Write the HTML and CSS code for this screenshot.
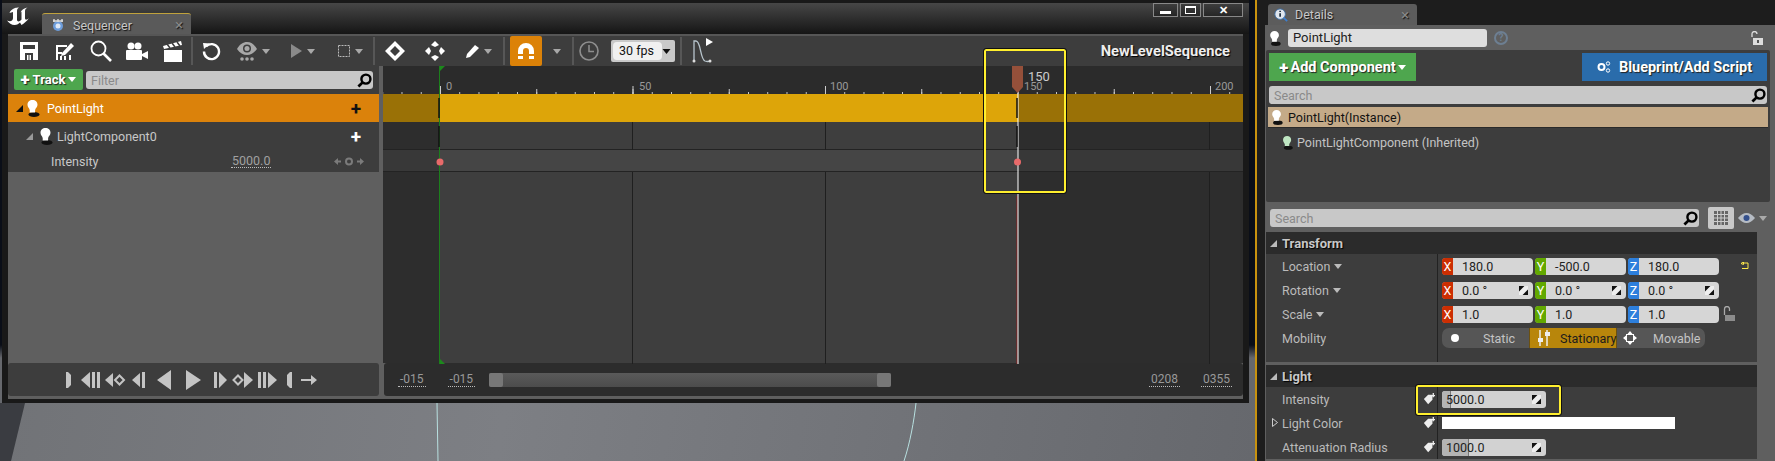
FILE: index.html
```html
<!DOCTYPE html>
<html lang="en">
<head>
  <meta charset="UTF-8">
  <title>Sequencer</title>
  <link rel="stylesheet" href="styles.css">
</head>
<body>
  <svg class="defs" width="0" height="0">
    <defs>
      <symbol id="bulb" viewBox="0 0 16 18">
        <ellipse cx="9" cy="15.5" rx="5.5" ry="2.5" fill="#111"/>
        <path d="M7.5 1C4.6 1 2.5 3 2.5 5.8c0 2.2 1.6 3.2 2.2 5.2v2.4h5.4V11c.6-2 2.4-3 2.4-5.2C12.500 3 10.400 1 7.500 1z" fill="currentColor"/>
      </symbol>
      <symbol id="spin" viewBox="0 0 10 10">
        <path d="M6 0h4v4L4 10H0V6z" fill="#eee"/>
        <path d="M0 0h6L0 6zM10 10H4l6-6z" fill="#111"/>
      </symbol>
      <symbol id="glass" viewBox="0 0 16 16">
        <circle cx="9.500" cy="6.500" r="4.800" fill="none" stroke="#000" stroke-width="2.600"/>
        <path d="M6 10l-4.500 4.500" stroke="#000" stroke-width="3"/>
      </symbol>
      <symbol id="key" viewBox="0 0 14 14">
        <path d="M1 7l5-5h5v6l-5 5z" fill="#eee"/>
        <path d="M10 3h4M12 0v5" stroke="#eee" stroke-width="1.500"/>
      </symbol>
      <symbol id="caret" viewBox="0 0 8 5">
        <path d="M0 0h8L4 5z" fill="currentColor"/>
      </symbol>
    </defs>
  </svg>

  <div class="stage">
    <div class="win">
      <div class="titlebar">
        <svg class="ue-logo" viewBox="0 0 22 18"><path d="M8 1C5 2 3 4 2.500 6L6 5v6c0 3-2.500 4-6 2.500C2 16 4.500 18 7.500 18c2.500 0 4.500-1.500 5.500-2.500l1.500 2.500c2.500-1.500 5.500-4 7.500-7-2 2-4 2.500-4 0V4c0-1.500 1-2.500 2.500-3.500-3.500.5-6 2.500-7 5l1-.7v7.700c-1 1.500-3 2.500-4 1.500-.5-.5-.5-1-.5-2V4c0-1.500.5-2.500 2-3.500-1.500 0-3 .3-4 .5z" fill="#fff"/></svg>
        <div class="tab">
          <svg class="tab-ico" viewBox="0 0 14 14"><circle cx="7" cy="8" r="5" fill="#6d9ddb"/><path d="M2 3h10M3 1v3M7 1v3M11 1v3" stroke="#ddd" stroke-width="1.400"/><circle cx="7" cy="8" r="2.500" fill="#dfe9f7"/></svg>
          <span>Sequencer</span>
          <i class="tab-x">×</i>
        </div>
        <div class="win-ctl">
          <span class="ctl ctl-min"><b></b></span>
          <span class="ctl ctl-max"><b></b></span>
          <span class="ctl ctl-close">✕</span>
        </div>
      </div>

      <div class="toolbar">
        <span class="tb-btn"><svg width="20" height="20" viewBox="0 0 20 20"><path d="M1 1h18v18h-5v-7H6v7H1z M4 4v4h12V4z" fill="#fff" fill-rule="evenodd"/><path d="M8 14h1.500v5H8zM10.500 14H12v5h-1.500z" fill="#fff"/></svg></span>
        <span class="tb-btn"><svg width="20" height="20" viewBox="0 0 20 20"><path d="M1 4h11v2H3v5h4v2H3v6H1zM9 15h2v4H9zM5 15h2v4H5zM14 14h2v5h-2z" fill="#fff"/><path d="M7 12l9-10 3 3-9 9-4 1z" fill="#fff"/></svg></span>
        <span class="tb-btn"><svg width="22" height="22" viewBox="0 0 22 22"><circle cx="8.500" cy="8.500" r="7" fill="none" stroke="#fff" stroke-width="1.800"/><path d="M13.500 13.500L21 21" stroke="#fff" stroke-width="2.600"/></svg></span>
        <span class="tb-btn"><svg width="22" height="18" viewBox="0 0 22 18"><circle cx="5" cy="4" r="3.500" fill="#fff"/><circle cx="12" cy="4" r="3.500" fill="#fff"/><rect y="8" width="16" height="10" rx="1" fill="#fff"/><path d="M16 12l6-3v8l-6-3z" fill="#fff"/></svg></span>
        <span class="tb-btn"><svg width="20" height="21" viewBox="0 0 20 21"><path d="M1 9h18v12H1z" fill="#fff"/><path d="M0 5l18-5 1 4L1 8z" fill="#fff"/><path d="M4 3l3 4M9 2l3 4M14 1l3 4" stroke="#3d3d3d" stroke-width="1.500"/></svg></span>
        <i class="tb-sep"></i>
        <span class="tb-btn"><svg width="19" height="19" viewBox="0 0 19 19"><path d="M4 4.500A7.500 7.500 0 1 1 2 9.500" fill="none" stroke="#fff" stroke-width="2.400"/><path d="M1 1l7 .5L2 7z" fill="#fff"/></svg></span>
        <span class="tb-drop dim"><svg width="20" height="19" viewBox="0 0 20 19"><path d="M0 7c3-5 6-7 10-7s7 2 10 7c-3 4-6 6-10 6S3 11 0 7z" fill="#a8a8a8"/><circle cx="10" cy="6.500" r="4" fill="#3d3d3d"/><circle cx="10" cy="6.500" r="2.500" fill="#a8a8a8"/><circle cx="5" cy="17" r="1.800" fill="#a8a8a8"/><circle cx="10" cy="17" r="1.800" fill="#a8a8a8"/><circle cx="15" cy="17" r="1.800" fill="#a8a8a8"/></svg><svg class="cr" width="8" height="5"><use href="#caret"/></svg></span>
        <span class="tb-drop dim drop-play"><svg width="11" height="14" viewBox="0 0 11 14"><path d="M0 0l11 7-11 7z" fill="#8a8a8a"/></svg><svg class="cr" width="8" height="5"><use href="#caret"/></svg></span>
        <span class="tb-drop dim drop-sel"><svg width="12" height="12" viewBox="0 0 12 12"><rect x=".5" y=".5" width="11" height="11" fill="none" stroke="#bbb" stroke-dasharray="2 1"/></svg><svg class="cr" width="8" height="5"><use href="#caret"/></svg></span>
        <i class="tb-sep"></i>
        <span class="tb-key"><svg width="20" height="20" viewBox="0 0 20 20"><path d="M10 0l10 10-10 10L0 10zM10 5L5 10l5 5 5-5z" fill="#fff" fill-rule="evenodd"/></svg></span>
        <span class="tb-key"><svg width="20" height="20" viewBox="0 0 20 20"><path d="M10 0l4 4-4 2-4-2zM10 20l-4-4 4-2 4 2zM0 10l4-4 2 4-2 4zM20 10l-4 4-2-4 2-4z" fill="#fff"/></svg></span>
        <span class="tb-drop"><svg width="13" height="13" viewBox="0 0 13 13"><path d="M0 13l1-4 8-9 4 3-9 9z" fill="#fff"/></svg><svg class="cr" width="8" height="5"><use href="#caret"/></svg></span>
        <i class="tb-sep"></i>
        <span class="tb-snap"><svg width="18" height="18" viewBox="0 0 18 18"><path d="M1 12V9a8 8 0 0 1 16 0v3h-5V9a3 3 0 0 0-6 0v3z" fill="#fff"/><path d="M1 14h5v3H1zM12 14h5v3h-5z" fill="#fff"/></svg></span>
        <span class="tb-snapdrop"><svg class="cr" width="8" height="5"><use href="#caret"/></svg></span>
        <i class="tb-sep tb-sep-nm"></i>
        <span class="tb-clock"><svg width="20" height="20" viewBox="0 0 20 20"><circle cx="10" cy="10" r="9" fill="none" stroke="#8e8e8e" stroke-width="1.600"/><path d="M10 4v6.500h5" fill="none" stroke="#8e8e8e" stroke-width="1.500"/></svg></span>
        <span class="fps"><span class="fps-val">30 fps</span><svg width="9" height="5"><use href="#caret"/></svg></span>
        <i class="tb-sep tb-sep-fps"></i>
        <svg class="curve-ico" width="23" height="28" viewBox="0 0 23 28"><path d="M3 24V4h2c5 0 4 18 9 20 2 .7 4 .5 5 0" fill="none" stroke="#b7c4cc" stroke-width="1.300"/><circle cx="3" cy="24" r="1.500" fill="#ddd"/><circle cx="19" cy="24" r="1.500" fill="#ddd"/><path d="M15 1l7 4-7 4z" fill="#fff"/></svg>
        <span class="seq-name">NewLevelSequence</span>
      </div>

      <div class="seq-main">
        <div class="tree">
          <div class="filter-row">
            <span class="track-btn"><b class="plus">+</b> Track <svg width="8" height="5"><use href="#caret"/></svg></span>
            <span class="filter"><span>Filter</span><svg width="15" height="15"><use href="#glass"/></svg></span>
          </div>
          <div class="tree-row tree-sel">
            <svg class="tri" width="7" height="7" viewBox="0 0 7 7"><path d="M7 0v7H0z" fill="#111"/></svg>
            <svg class="bulb" width="16" height="18"><use href="#bulb"/></svg>
            <span class="tree-name">PointLight</span>
            <span class="tree-add add-dark">+</span>
          </div>
          <div class="tree-row tree-sub">
            <svg class="tri" width="7" height="7" viewBox="0 0 7 7"><path d="M7 0v7H0z" fill="#999"/></svg>
            <svg class="bulb" width="16" height="18"><use href="#bulb"/></svg>
            <span class="tree-name">LightComponent0</span>
            <span class="tree-add">+</span>
          </div>
          <div class="tree-row tree-prop">
            <span class="prop-name">Intensity</span>
            <span class="prop-val">5000.0</span>
            <span class="prop-keys">
              <svg width="30" height="9" viewBox="0 0 30 9"><path d="M0 4.500L4 1v2.500h3v2H4V8zM30 4.500L26 1v2.500h-3v2h3V8z" fill="#7b7b7b"/><circle cx="15" cy="4.500" r="3" fill="none" stroke="#7b7b7b" stroke-width="2"/></svg>
            </span>
          </div>
        </div>

        <div class="timeline">
          <div class="ruler">
            <span class="r-lbl" style="left:63px">0</span>
            <span class="r-lbl" style="left:256px">50</span>
            <span class="r-lbl" style="left:447px">100</span>
            <span class="r-lbl" style="left:641px">150</span>
            <span class="r-lbl" style="left:832px">200</span>
            <span class="head-lbl">150</span>
          </div>
          <div class="tl-row tl-sel"></div>
          <div class="tl-row tl-sub"></div>
          <div class="tl-row tl-prop"></div>
          <div class="tl-rest"></div>
          <svg class="tl-over" width="860" height="298" viewBox="0 0 860 298">
            <g stroke="#1f1f1f">
              <path d="M249.500 56v28M249.500 106v192M442.500 56v28M442.500 106v192M826.500 56v28M826.500 106v192"/>
            </g>
            <path d="M56.500 0v298" stroke="#1c7f1c"/>
            <path d="M57 0h5l-5 5z" fill="#1c8a1c"/>
            <path d="M57 293l5 5h-5z" fill="#1c8a1c"/>
            <path d="M56 32v20M56 60v21" stroke="#111" stroke-width="1.500"/>
            <path d="M634 130v168" stroke="#8a1c1c"/>
            <path d="M635 28v270" stroke="#fff"/>
            <path d="M634 32v20M634 60v21" stroke="#111" stroke-width="1.500"/>
            <path d="M629 0h11v21l-5.500 6-5.500-6z" fill="#95503a"/>
            <circle cx="57" cy="96" r="3.500" fill="#e86a6a"/>
            <circle cx="634.500" cy="96" r="3.500" fill="#e86a6a"/>
          </svg>
        </div>
      </div>

      <div class="seq-foot">
        <div class="transport">
          <svg width="280" height="24" viewBox="0 0 280 24" fill="#c4c4c4">
            <path d="M16 4h2l3 3v10l-3 3h-2z"/>
            <path d="M31 12l9-8v16zM42 4h3v16h-3zM47 4h3v16h-3z"/>
            <path d="M55 12l8-7v14z"/><path d="M69.500 7.500l4.500 4.500-4.500 4.500L65 12z" fill="none" stroke="#c4c4c4" stroke-width="2"/>
            <path d="M82 12l8-7v14zM92 4h3v16h-3z"/>
            <path d="M107 12l14-10v20zM136 2l15 10-15 10z"/>
            <path d="M164 4h3v16h-3zM169 4l8 8-8 8z"/>
            <path d="M188 7.500l4.500 4.500-4.500 4.500-4.500-4.500z" fill="none" stroke="#c4c4c4" stroke-width="2"/><path d="M194 4l9 8-9 8z"/>
            <path d="M208 4h3v16h-3zM213 4h3v16h-3zM218 4l9 8-9 8z"/>
            <path d="M242 4h-2l-3 3v10l3 3h2z"/>
            <path d="M251 11h10V7l6 5-6 5v-4h-10z"/>
          </svg>
        </div>
        <div class="tl-foot">
          <span class="time t-first">-015</span>
          <span class="time t-second">-015</span>
          <div class="hscroll"><i></i><i></i></div>
          <span class="time t-third">0208</span>
          <span class="time t-fourth">0355</span>
        </div>
      </div>
    </div>

    <div class="viewport">
      <svg class="vp-lines" width="1255" height="58" viewBox="0 0 1255 58">
        <path d="M0 0h25L11 58H0z" fill="#3a3c41"/>
        <path d="M437 0l1 58M916 0c-2 18-6 40-12 58" fill="none" stroke="#b8e0e0"/>
      </svg>
    </div>

    <div class="callout callout-seq"></div>
  </div>

  <aside class="details">
    <div class="det-tabs">
      <div class="det-tab">
        <svg class="tab-ico" width="16" height="16" viewBox="0 0 16 16"><circle cx="7" cy="7" r="6" fill="#dfe6ee" stroke="#3b6ea8"/><path d="M7 3v1.500M7 6v4" stroke="#234" stroke-width="2"/><path d="M11 11l4 4" stroke="#3b7ed0" stroke-width="2"/></svg>
        <span>Details</span>
        <i class="tab-x">×</i>
      </div>
    </div>
    <div class="name-row">
      <svg class="bulb" width="14" height="16"><use href="#bulb"/></svg>
      <span class="name-input">PointLight</span>
      <span class="help">?</span>
      <svg class="lock" width="14" height="14" viewBox="0 0 14 14"><path d="M2 6V3a2.500 2.500 0 0 1 5 0" fill="none" stroke="#ddd" stroke-width="1.300"/><rect x="3" y="7" width="10" height="7" fill="#ddd"/><rect x="7" y="9" width="2" height="3" fill="#555"/></svg>
    </div>
    <div class="comp-box">
      <div class="comp-actions">
        <span class="add-comp"><b class="plus">+</b>Add Component <svg width="8" height="5"><use href="#caret"/></svg></span>
        <span class="bp-btn">
          <svg width="14" height="12" viewBox="0 0 14 12"><circle cx="4.500" cy="6" r="3" fill="none" stroke="#fff" stroke-width="2"/><circle cx="11" cy="2.500" r="1.700" fill="none" stroke="#fff"/><circle cx="11" cy="9.500" r="1.700" fill="none" stroke="#fff"/></svg>
          Blueprint/Add Script
        </span>
      </div>
      <div class="search search-comp"><span>Search</span><svg width="15" height="15"><use href="#glass"/></svg></div>
      <div class="inst-row">
        <svg class="bulb" width="14" height="16"><use href="#bulb"/></svg>
        <span>PointLight(Instance)</span>
      </div>
      <div class="inh-row">
        <svg class="bulb bulb-green" width="13" height="15"><use href="#bulb"/></svg>
        <span>PointLightComponent (Inherited)</span>
      </div>
    </div>
    <div class="search-row">
      <div class="search search-det"><span>Search</span><svg width="15" height="15"><use href="#glass"/></svg></div>
      <span class="grid-btn"><svg width="14" height="14" viewBox="0 0 14 14"><path d="M0 0h14v14H0z" fill="#666"/><path d="M0 3.500h14M0 7h14M0 10.500h14M3.500 0v14M7 0v14M10.500 0v14" stroke="#ccc"/></svg></span>
      <svg class="eye-ico" width="17" height="10" viewBox="0 0 17 10"><path d="M0 5c3-3.500 5.500-5 8.500-5s5.500 1.500 8.500 5c-3 3.500-5.500 5-8.500 5S3 8.500 0 5z" fill="#b6bcc4"/><circle cx="8.500" cy="5" r="3" fill="#34508c"/></svg>
      <svg class="eye-cr" width="8" height="5"><use href="#caret"/></svg>
    </div>

    <div class="props">
      <section class="sect">
        <h3 class="sect-head"><svg width="7" height="7" viewBox="0 0 7 7"><path d="M7 0v7H0z" fill="#bbb"/></svg>Transform</h3>
        <div class="p-row">
          <div class="p-label">Location <svg width="8" height="5"><use href="#caret"/></svg></div>
          <div class="p-val">
            <div class="vec">
              <span class="fld"><b class="ax ax-x">X</b><span>180.0</span></span>
              <span class="fld"><b class="ax ax-y">Y</b><span>-500.0</span></span>
              <span class="fld"><b class="ax ax-z">Z</b><span>180.0</span></span>
            </div>
            <svg class="reset" width="8" height="8" viewBox="0 0 8 8"><path d="M3 1H7v5.500H1M2.500 0v2.500L0 1.500z" fill="none" stroke="#ffe94a"/></svg>
          </div>
        </div>
        <div class="p-row">
          <div class="p-label">Rotation <svg width="8" height="5"><use href="#caret"/></svg></div>
          <div class="p-val">
            <div class="vec">
              <span class="fld"><b class="ax ax-x">X</b><span>0.0 °</span><svg class="sp" width="9" height="9"><use href="#spin"/></svg></span>
              <span class="fld"><b class="ax ax-y">Y</b><span>0.0 °</span><svg class="sp" width="9" height="9"><use href="#spin"/></svg></span>
              <span class="fld"><b class="ax ax-z">Z</b><span>0.0 °</span><svg class="sp" width="9" height="9"><use href="#spin"/></svg></span>
            </div>
          </div>
        </div>
        <div class="p-row">
          <div class="p-label">Scale <svg width="8" height="5"><use href="#caret"/></svg></div>
          <div class="p-val">
            <div class="vec">
              <span class="fld"><b class="ax ax-x">X</b><span>1.0</span></span>
              <span class="fld"><b class="ax ax-y">Y</b><span>1.0</span></span>
              <span class="fld"><b class="ax ax-z">Z</b><span>1.0</span></span>
            </div>
            <svg class="scale-lock" width="13" height="16" viewBox="0 0 13 16"><path d="M1.500 9V3a2.500 2.500 0 0 1 5 0v2" fill="none" stroke="#aaa" stroke-width="1.300"/><rect x="2" y="9" width="10" height="6" fill="#8c8c8c"/></svg>
          </div>
        </div>
        <div class="p-row p-row-mob">
          <div class="p-label">Mobility</div>
          <div class="p-val">
            <div class="mob">
              <span class="mob-opt mob-static"><i class="dot"></i><span>Static</span></span>
              <span class="mob-opt mob-stat">
                <svg width="13" height="16" viewBox="0 0 13 16"><path d="M2 0v16M9 0v16" stroke="#eee" stroke-width="1.500"/><rect x="0" y="8" width="5" height="4" fill="#eee"/><rect x="7" y="2" width="5" height="4" fill="#eee"/></svg>
                <span>Stationary</span>
              </span>
              <span class="mob-opt mob-move">
                <svg width="14" height="14" viewBox="0 0 14 14"><path d="M7 0l2.500 3h-5zM7 14l-2.500-3h5zM0 7l3-2.500v5zM14 7l-3 2.500v-5z" fill="#fff"/><rect x="3.500" y="3.500" width="7" height="7" fill="none" stroke="#fff"/></svg>
                <span>Movable</span>
              </span>
            </div>
          </div>
        </div>
      </section>
      <section class="sect sect-light">
        <h3 class="sect-head"><svg width="7" height="7" viewBox="0 0 7 7"><path d="M7 0v7H0z" fill="#bbb"/></svg>Light</h3>
        <div class="p-row">
          <div class="p-label">Intensity <svg class="p-key" width="12" height="12"><use href="#key"/></svg></div>
          <div class="p-val">
            <span class="slider-fld"><i class="fill" style="width:9px"></i><span>5000.0</span><svg class="sp" width="9" height="9"><use href="#spin"/></svg></span>
          </div>
        </div>
        <div class="p-row">
          <div class="p-label"><svg class="p-exp" width="6" height="9" viewBox="0 0 6 9"><path d="M.5.500l5 4-5 4z" fill="none" stroke="#ccc"/></svg>Light Color <svg class="p-key" width="12" height="12"><use href="#key"/></svg></div>
          <div class="p-val"><span class="color-swatch"></span></div>
        </div>
        <div class="p-row">
          <div class="p-label">Attenuation Radius <svg class="p-key" width="12" height="12"><use href="#key"/></svg></div>
          <div class="p-val">
            <span class="slider-fld"><i class="fill" style="width:27px"></i><span>1000.0</span><svg class="sp" width="9" height="9"><use href="#spin"/></svg></span>
          </div>
        </div>
      </section>
      <div class="callout callout-det"></div>
    </div>
  </aside>
</body>
</html>
```

FILE: styles.css
```css
:root {
  --panel: #3d3d3d;
  --panel-dark: #2c2c2c;
  --gutter: #5f5f5f;
  --text: #c8c8c8;
  --in-range: #3e3e3e;
  --out-range: #2d2d2d;
}

* {
  box-sizing: border-box;
}

html, body {
  margin: 0;
  height: 461px;
  overflow: hidden;
}

body {
  display: flex;
  font-family: Roboto, "Liberation Sans", sans-serif;
  font-size: 12.5px;
  color: var(--text);
  background: #1d1d1d;
}

.defs {
  position: absolute;
}

svg {
  display: block;
  flex: none;
}

/* left side: sequencer window over the viewport */

.stage {
  position: relative;
  width: 1257px;
  flex: none;
  display: flex;
  flex-direction: column;
  border-right: 2px solid #c8920f;
  background: linear-gradient(to bottom, #0a0e18 345px, #66686d 358px);
}

.win {
  width: 1247px;
  height: 403px;
  margin-left: 2px;
  padding: 3px 6px 4px;
  background: #191919;
  display: flex;
  flex-direction: column;
}

.titlebar {
  height: 31px;
  margin: 0 -6px;
  padding: 0 6px 0 5px;
  display: flex;
  background: linear-gradient(to bottom, #474747, #151515);
  position: relative;
}

.ue-logo {
  width: 22px;
  height: 18px;
  margin: 4px 13px 0 0;
}

.tab {
  width: 149px;
  margin-top: 10px;
  height: 23px;
  padding: 0 8px 0 9px;
  display: flex;
  align-items: center;
  gap: 8px;
  background: #5a5a5a;
  border-top: 1px solid #c0a23c;
  border-radius: 3px 3px 0 0;
  text-shadow: 1px 1px 1px #111;
}

.tab-ico {
  width: 14px;
  height: 14px;
}

.tab-x {
  margin-left: auto;
  font-style: normal;
  font-size: 15px;
  color: #888;
}

.win-ctl {
  margin-left: auto;
  display: flex;
  height: 14px;
  gap: 2px;
  margin-right: 0;
}

.ctl {
  height: 14px;
  display: flex;
  align-items: center;
  justify-content: center;
  border: 1px solid #888;
  background: linear-gradient(to bottom, #3d3d3d, #262626);
  color: #fff;
  font-size: 11px;
  font-weight: 700;
}

.ctl-min {
  width: 25px;
}

.ctl-min b {
  width: 11px;
  height: 3px;
  margin-top: 4px;
  background: #fff;
}

.ctl-max {
  width: 21px;
}

.ctl-max b {
  width: 11px;
  height: 8px;
  border: 1px solid #fff;
  border-top-width: 2px;
}

.ctl-close {
  width: 40px;
}

/* toolbar */

.toolbar {
  height: 32px;
  padding: 0 0 0 3px;
  display: flex;
  align-items: center;
  background: var(--panel);
  border-top: 2px solid #565656;
  position: relative;
}

.tb-btn {
  width: 36px;
  display: flex;
  justify-content: center;
}

.tb-sep {
  width: 2px;
  height: 28px;
  flex: none;
  background: #575757;
}

.tb-drop {
  width: 48px;
  display: flex;
  align-items: center;
  justify-content: center;
  gap: 5px;
  color: #a8a8a8;
}

.drop-play {
  padding-left: 3px;
}

.drop-sel {
  padding-left: 2px;
}

.tb-key {
  width: 40px;
  display: flex;
  justify-content: center;
}

.tb-snap {
  width: 32px;
  height: 30px;
  margin-left: 5px;
  display: flex;
  align-items: center;
  justify-content: center;
  background: #dc8208;
  border-radius: 2px;
}

.tb-snapdrop {
  width: 30px;
  display: flex;
  justify-content: center;
  color: #a8a8a8;
}

.tb-clock {
  width: 31px;
  padding-left: 5px;
}

.fps {
  width: 64px;
  height: 22px;
  margin-left: 6px;
  padding-right: 4px;
  display: flex;
  align-items: center;
  justify-content: space-between;
  background: #c9c9c9;
  border-radius: 2px;
  color: #111;
}

.fps-val {
  width: 50px;
  height: 18px;
  margin-left: 2px;
  padding-left: 6px;
  line-height: 18px;
  background: #f0f0f0;
  border-radius: 4px;
}

.tb-sep-fps {
  margin-left: 5px;
}

.curve-ico {
  margin-left: 9px;
}

.seq-name {
  margin-left: auto;
  margin-right: 13px;
  color: #eee;
  font-size: 14.7px;
  font-weight: 700;
  text-shadow: 1px 1px 1px #000;
}

/* tree on the left, tracks on the right */

.seq-main {
  height: 298px;
  display: flex;
}

.tree {
  width: 375px;
  flex: none;
  background: var(--gutter);
}

.filter-row {
  height: 28px;
  padding: 3px 6px 0 6px;
  display: flex;
  gap: 3px;
  background: var(--panel);
  margin-right: 4px;
}

.track-btn {
  width: 69px;
  height: 21px;
  display: flex;
  align-items: center;
  justify-content: center;
  gap: 3px;
  background: #4ea64e;
  border-radius: 2px;
  color: #fff;
  font-weight: 700;
  font-size: 13px;
  text-shadow: 1px 1px 1px #222;
}

.plus {
  font-size: 17px;
  line-height: 17px;
}

.filter {
  flex: 1;
  height: 18px;
  margin-top: 2px;
  padding: 0 1px 0 5px;
  display: flex;
  align-items: center;
  justify-content: space-between;
  background: #c8c8c8;
  border-radius: 3px;
  color: #8a8a8a;
}

.tree-row {
  display: flex;
  align-items: center;
  margin-right: 4px;
  position: relative;
}

.tri {
  margin: 0 2px 0 1px;
}

.tree-sel {
  height: 28px;
  padding-left: 7px;
  background: #db820b;
  color: #fff;
}

.tree-sel .tree-name {
  margin-left: 6px;
}

.tree-sub {
  height: 28px;
  padding-left: 17px;
  background: var(--panel);
}

.tree-sub .tri {
  margin-right: 5px;
}

.bulb {
  color: #fff;
}

.bulb-green {
  color: #bfe6c2;
}

.tree-name {
  margin-left: 3px;
}

.tree-add {
  position: absolute;
  right: 18px;
  font-size: 19px;
  font-weight: 700;
  color: #fff;
}

.add-dark {
  color: #111;
}

.tree-prop {
  height: 22px;
  padding-left: 43px;
  background: var(--panel);
}

.prop-val {
  position: absolute;
  left: 223px;
  color: #a0a0a0;
  border-bottom: 1px dotted #bbb;
  line-height: 13px;
  padding: 0 1px;
}

.prop-keys {
  position: absolute;
  left: 326px;
}

.timeline {
  flex: 1;
  position: relative;
  display: flex;
  flex-direction: column;
  background: var(--out-range);
}

.ruler {
  height: 28px;
  position: relative;
  background:
    linear-gradient(90deg, #ccc 1px, transparent 1px) 57px 100% / 192.5px 8px repeat-x,
    linear-gradient(90deg, #ccc 1px, transparent 1px) 57px 100% / 96.25px 5px repeat-x,
    linear-gradient(90deg, #ccc 1px, transparent 1px) 18.5px 100% / 19.25px 2px repeat-x,
    #2b2b2b;
}

.r-lbl {
  position: absolute;
  bottom: 1px;
  font-size: 11px;
  color: #999;
}

.head-lbl {
  position: absolute;
  left: 645px;
  top: 3px;
  font-size: 13px;
  color: #ccc;
}

.tl-row {
  --on: var(--in-range);
  --off: var(--out-range);
  background: linear-gradient(90deg, var(--off) 57px, var(--on) 57px, var(--on) 635px, var(--off) 635px);
}

.tl-sel {
  height: 28px;
  --on: #dda509;
  --off: #9a7106;
}

.tl-sub {
  height: 28px;
  border-bottom: 1px solid #232323;
}

.tl-prop {
  height: 22px;
  --on: #454545;
  --off: #383838;
  border-bottom: 1px solid #232323;
}

.tl-rest {
  flex: 1;
  background: linear-gradient(90deg, var(--out-range) 57px, var(--in-range) 57px, var(--in-range) 635px, var(--out-range) 635px);
}

.tl-over {
  position: absolute;
  left: 0;
  top: 0;
}

/* bottom strip */

.seq-foot {
  height: 36px;
  display: flex;
  gap: 5px;
  background: var(--gutter);
  border-bottom: 1px solid #5e5e5e;
  padding-bottom: 2px;
}

.transport {
  width: 371px;
  padding-left: 42px;
  display: flex;
  align-items: center;
  background: var(--panel);
  border-radius: 3px;
}

.tl-foot {
  flex: 1;
  padding: 0 11px 0 14px;
  display: flex;
  align-items: center;
  background: var(--panel-dark);
  border-radius: 3px;
}

.time {
  font-size: 12px;
  line-height: 14px;
  color: #999;
  border-bottom: 1px dotted #bbb;
  padding: 0 2px;
}

.t-second {
  margin-left: 22px;
}

.hscroll {
  width: 402px;
  height: 14px;
  margin: 0 auto 0 14px;
  display: flex;
  justify-content: space-between;
  background: linear-gradient(to bottom, #5a5a5a, #4c4c4c);
  border-radius: 2px;
}

.hscroll i {
  width: 14px;
  background: #777;
  border-radius: 2px;
}

.t-fourth {
  margin-left: 21px;
}

.viewport {
  width: 1255px;
  height: 58px;
  background: linear-gradient(100deg, #717377 0, #7d7f84 40%, #66686d 100%);
}

.callout {
  position: absolute;
  border: 2px solid #ffef2e;
  outline: 1px solid #111;
  border-radius: 2px;
}

.callout-seq {
  left: 984px;
  top: 49px;
  width: 82px;
  height: 144px;
}

/* details panel */

.details {
  flex: 1;
  margin-left: 8px;
  min-width: 0;
  background: var(--gutter);
  display: flex;
  flex-direction: column;
  position: relative;
}

.det-tabs {
  height: 25px;
  background: #1d1d1d;
  padding-top: 4px;
}

.det-tab {
  width: 149px;
  height: 21px;
  margin-left: 3px;
  padding: 0 8px 0 6px;
  display: flex;
  align-items: center;
  gap: 7px;
  background: #5c5c5c;
  border-radius: 3px 3px 0 0;
  text-shadow: 1px 1px 1px #111;
}

.name-row {
  height: 25px;
  padding: 0 11px 0 3px;
  display: flex;
  align-items: center;
  background: var(--gutter);
}

.name-input {
  width: 199px;
  height: 18px;
  margin-left: 6px;
  padding-left: 5px;
  line-height: 18px;
  font-size: 13px;
  background: #dedede;
  border-radius: 3px;
  color: #222;
}

.help {
  width: 14px;
  height: 14px;
  margin-left: 7px;
  border: 2px solid #6d7f92;
  border-radius: 50%;
  color: #6d7f92;
  font-size: 10px;
  font-weight: 700;
  line-height: 10px;
  text-align: center;
}

.lock {
  margin-left: auto;
}

.comp-box {
  height: 152px;
  margin: 0 5px 0 1px;
  padding: 3px 0 0;
  background: var(--panel);
  border-radius: 2px;
}

.comp-actions {
  height: 28px;
  padding: 0 3px;
  display: flex;
  justify-content: space-between;
  color: #fff;
  font-size: 14.5px;
  font-weight: 700;
  text-shadow: 1px 1px 1px #222;
}

.add-comp {
  width: 147px;
  display: flex;
  align-items: center;
  justify-content: center;
  gap: 2px;
  background: #4ea64e;
}

.bp-btn {
  width: 185px;
  display: flex;
  align-items: center;
  justify-content: center;
  gap: 8px;
  background: #2a6cab;
}

.search {
  display: flex;
  align-items: center;
  justify-content: space-between;
  padding: 0 1px 0 5px;
  height: 18px;
  background: #c8c8c8;
  border-radius: 3px;
  color: #8a8a8a;
}

.search-comp {
  margin: 5px 3px 3px;
}

.inst-row {
  height: 21px;
  margin: 0 2px;
  padding: 0 2px;
  display: flex;
  align-items: center;
  gap: 4px;
  background: #c4aa88;
  border-bottom: 1px solid #2a2a2a;
  color: #111;
}

.inh-row {
  height: 20px;
  margin-top: 4px;
  padding-left: 15px;
  display: flex;
  align-items: center;
  gap: 3px;
  color: #c4c4c4;
}

.search-row {
  height: 30px;
  padding: 7px 0 0 5px;
  display: flex;
  align-items: flex-start;
}

.search-det {
  width: 429px;
}

.grid-btn {
  width: 26px;
  height: 22px;
  margin: -2px 0 0 9px;
  display: flex;
  align-items: center;
  justify-content: center;
  background: #c8c8c8;
  border-radius: 2px;
}

.eye-ico {
  margin: 4px 0 0 4px;
}

.eye-cr {
  margin: 7px 0 0 4px;
  color: #aaa;
}

.props {
  flex: 1;
  position: relative;
  padding-right: 18px;
}

.sect {
  margin-left: 1px;
  background: var(--panel);
  position: relative;
}

.sect-light {
  margin-top: 3px;
}

.sect-head {
  height: 22px;
  margin: 0;
  padding-left: 4px;
  display: flex;
  align-items: center;
  gap: 5px;
  background: #2b2b2b;
  color: var(--text);
  font-size: 13px;
  font-weight: 700;
  text-shadow: 1px 1px 1px #000;
}

.p-row {
  height: 24px;
  display: flex;
  align-items: center;
}

.p-row-mob {
  height: 37px;
  padding-bottom: 11px;
  margin-top: -1px;
  align-items: center;
}

.p-label {
  width: 171px;
  height: 100%;
  padding: 0 0 0 16px;
  flex: none;
  display: flex;
  align-items: center;
  gap: 4px;
  color: #bbb;
  position: relative;
}

.p-val {
  flex: 1;
  height: 100%;
  padding-left: 4px;
  display: flex;
  align-items: center;
  border-left: 1px solid #222;
  position: relative;
}

.p-row-mob .p-val {
  height: 37px;
  margin-bottom: -11px;
  padding-bottom: 11px;
}

.p-key {
  position: absolute;
  right: 2px;
  top: 6px;
}

.p-exp {
  position: absolute;
  left: 6px;
  top: 7px;
}

.vec {
  display: flex;
  gap: 2px;
}

.fld {
  width: 91px;
  height: 17px;
  display: flex;
  align-items: center;
  background: #d6d6d6;
  border-radius: 4px;
  color: #222;
  position: relative;
}

.ax {
  width: 11px;
  height: 17px;
  margin-right: 9px;
  border-radius: 3px 0 0 3px;
  color: #fff;
  font-weight: 400;
  line-height: 17px;
  text-align: center;
}

.ax-x {
  background: #cc2e02;
}

.ax-y {
  background: #62a800;
}

.ax-z {
  background: #2d7fdc;
}

.sp {
  position: absolute;
  right: 5px;
  top: 4px;
}

.reset {
  margin-left: 22px;
}

.scale-lock {
  margin-left: 4px;
}

.mob {
  height: 20px;
  width: 263px;
  display: flex;
  background: #565656;
  border-radius: 7px;
  color: #c4c4c4;
  overflow: hidden;
}

.mob-opt {
  display: flex;
  align-items: center;
  position: relative;
}

.mob-static {
  width: 87px;
  padding-left: 9px;
}

.dot {
  width: 8px;
  height: 8px;
  background: #fff;
  border-radius: 50%;
}

.mob-static span {
  margin-left: 24px;
}

.mob-stat {
  width: 88px;
  padding-left: 8px;
  gap: 9px;
  background: #b8860b;
  border-left: 1px solid #6b5010;
  border-right: 1px solid #6b5010;
  color: #1c1c1c;
}

.mob-move {
  width: 88px;
  padding-left: 6px;
  gap: 16px;
}

.slider-fld {
  width: 104px;
  height: 17px;
  padding-left: 4px;
  display: flex;
  align-items: center;
  background: #d2d2d2;
  border-radius: 3px;
  color: #222;
  position: relative;
  overflow: hidden;
}

.slider-fld span {
  position: relative;
}

.fill {
  position: absolute;
  left: 0;
  top: 0;
  bottom: 0;
  background: #b4b4b4;
  border-right: 1px solid #777;
}

.color-swatch {
  width: 233px;
  height: 12px;
  background: #fff;
}

.callout-det {
  left: 151px;
  top: 153px;
  width: 145px;
  height: 30px;
}
```
